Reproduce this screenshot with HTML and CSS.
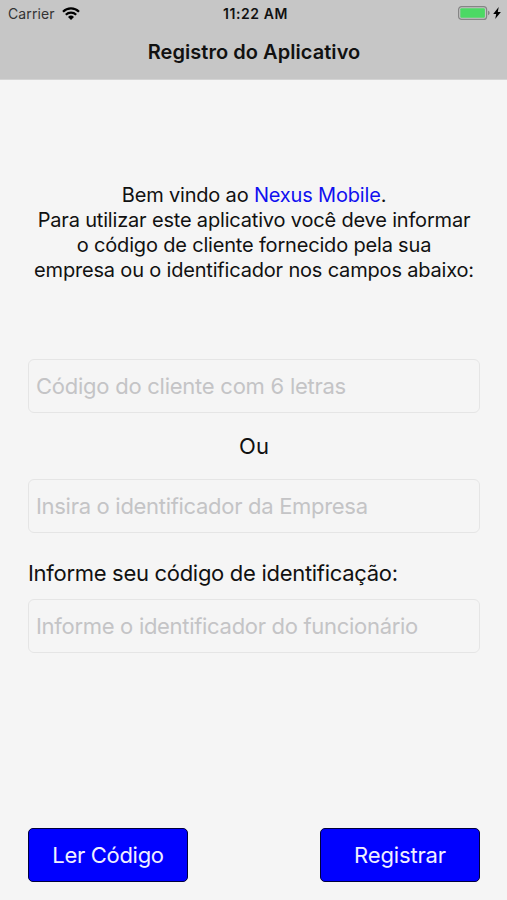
FILE: index.html
```html
<!DOCTYPE html>
<html lang="pt-BR">
<head>
<meta charset="UTF-8" />
<meta name="viewport" content="width=device-width, initial-scale=1" />
<title>Registro do Aplicativo</title>
<link rel="stylesheet" href="styles.css">
</head>
<body>

<header>
  <div class="status-bar">
    <div class="carrier">
      <span>Carrier</span>
      <svg class="wifi" viewBox="0 0 18 13" aria-hidden="true">
        <path d="M1 4.700a11.400 11.400 0 0 1 16 0M3.800 7.800a7.500 7.500 0 0 1 10.400 0" />
        <path class="dot" d="M9 13 6 9.900a4.300 4.300 0 0 1 6 0z" />
      </svg>
    </div>
    <div class="time">11:22 AM</div>
    <div class="power">
      <svg class="battery" viewBox="0 0 33 14" aria-hidden="true">
        <rect class="case" x="0.6" y="0.6" width="28" height="12.8" rx="3" />
        <rect class="charge" x="2.3" y="2.300" width="24.600" height="9.400" rx="1" />
        <path class="tip" d="M30 4.800c2.200.6 2.200 3.800 0 4.400z" />
      </svg>
      <svg class="bolt" viewBox="0 0 8 12" aria-hidden="true">
        <path d="M5.700 0 .2 6.900h3L2.200 12 7.900 4.900H4.800z" />
      </svg>
    </div>
  </div>
  <h1>Registro do Aplicativo</h1>
</header>

<main>
  <p class="welcome">
    <span>Bem vindo ao <a href="#">Nexus Mobile</a>.</span>
    <span>Para utilizar este aplicativo você deve informar</span>
    <span>o código de cliente fornecido pela sua</span>
    <span>empresa ou o identificador nos campos abaixo:</span>
  </p>

  <form>
    <input class="client" type="text" placeholder="Código do cliente com 6 letras" aria-label="Código do cliente" />
    <div class="or">Ou</div>
    <input class="company" type="text" placeholder="Insira o identificador da Empresa" aria-label="Identificador da Empresa" />
    <label for="employee">Informe seu código de identificação:</label>
    <input class="employee" id="employee" type="text" placeholder="Informe o identificador do funcionário" />
    <div class="actions">
      <button class="scan" type="button">Ler Código</button>
      <button class="register" type="button">Registrar</button>
    </div>
  </form>
</main>

</body>
</html>
```
FILE: styles.css
```css
* { box-sizing: border-box; }
body { font-family: Inter, sans-serif; margin: 0; height: 900px; display: flex; flex-direction: column; background: #f5f5f5; color: #111; overflow: hidden; }
header { height: 80px; flex: none; background: #c6c6c6; border-bottom: 1px solid #d4d4d4; }
.status-bar { height: 27px; padding: 0 6px 0 8px; display: grid; grid-template-columns: 1fr auto 1fr; align-items: center; font-size: 14px; }
.carrier { display: flex; align-items: center; gap: 7px; color: #333; letter-spacing: 0.1px; }
.wifi { width: 18px; height: 13px; margin-top: -1px; fill: none; stroke: #000; stroke-width: 2.2; }
.wifi .dot { fill: #000; stroke: none; }
.time { padding-left: 2px; font-weight: 600; letter-spacing: 0.55px; }
.power { display: flex; justify-content: flex-end; align-items: center; gap: 2px; margin-top: -1px; }
.battery { width: 33px; height: 14px; }
.battery .case { fill: none; stroke: #858585; stroke-width: 1.2; }
.battery .charge { fill: #4cd964; }
.battery .tip { fill: #858585; }
.bolt { width: 8px; height: 12px; }
h1 { margin: 0; padding-left: 1px; font-size: 20px; line-height: 51px; font-weight: 600; letter-spacing: 0.05px; text-align: center; }
main { flex: 1; padding: 103px 27px 18px 28px; display: flex; flex-direction: column; }
.welcome { margin: 0; font-size: 20px; line-height: 25px; letter-spacing: -0.18px; text-align: center; }
.welcome span { display: block; white-space: nowrap; }
.welcome a { color: #1010f0; text-decoration: none; }
form { flex: 1; margin-top: 76px; display: flex; flex-direction: column; font-size: 22px; letter-spacing: -0.3px; }
input { font: inherit; letter-spacing: inherit; width: 100%; height: 54px; flex: none; padding: 0 7px 1px; border: 1px solid #e5e5e5; border-radius: 6px; background: transparent; }
input::placeholder { color: #c4c4c6; opacity: 1; }
.client { letter-spacing: -0.25px; }
.or { height: 66px; line-height: 66px; text-align: center; letter-spacing: 0; }
label { height: 66px; padding-top: 25px; line-height: 30px; }
.actions { margin-top: auto; display: flex; justify-content: space-between; }
button { font: inherit; letter-spacing: inherit; width: 160px; height: 54px; padding: 0; border: 1px solid #00003c; border-radius: 5px; background: #00f; color: #f0f0ff; }
.register { letter-spacing: -0.15px; }
```
